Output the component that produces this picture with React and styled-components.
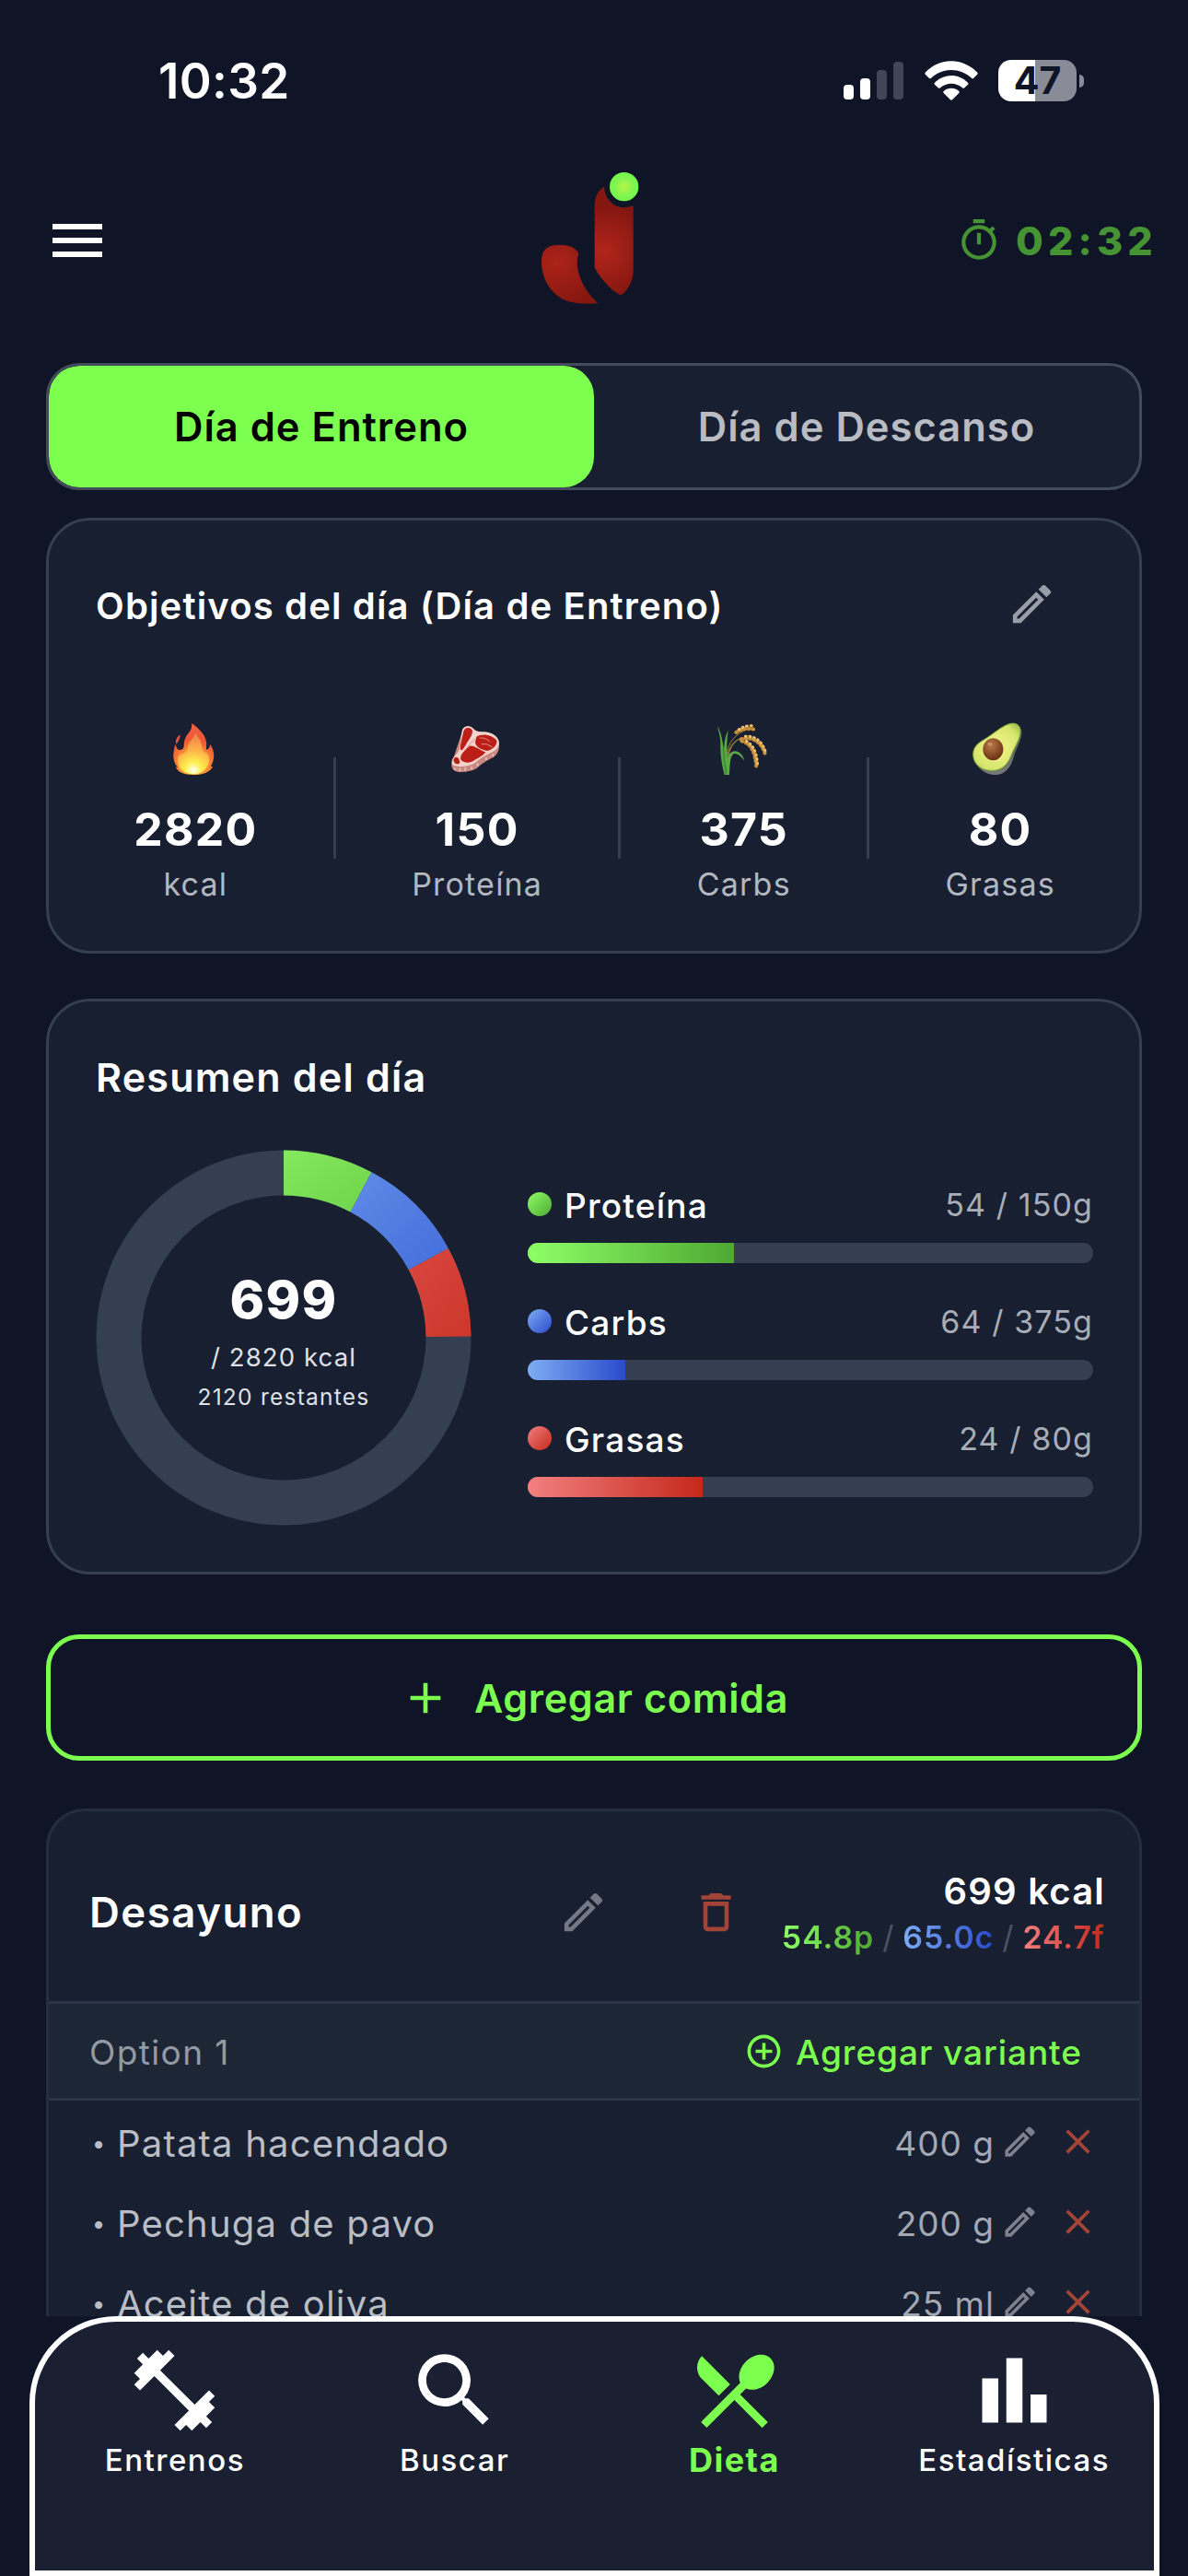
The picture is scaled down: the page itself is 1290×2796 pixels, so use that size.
import React, { useState } from 'react';
import styled, { createGlobalStyle } from 'styled-components';
import {
  MdAdd,
  MdAddCircleOutline,
  MdBarChart,
  MdClose,
  MdDeleteOutline,
  MdFitnessCenter,
  MdLocalDining,
  MdMenu,
  MdOutlineEdit,
  MdOutlineTimer,
  MdSearch,
} from 'react-icons/md';

const GlobalStyle = createGlobalStyle`
  *, *::before, *::after {
    box-sizing: border-box;
  }

  body {
    margin: 0;
    background: #0f1526;
    font-family: Inter, 'Liberation Sans', sans-serif;
    color: #fff;
  }

  svg {
    display: block;
    flex-shrink: 0;
  }

  button {
    font-family: inherit;
    padding: 0;
    margin: 0;
    border: none;
    background: none;
    color: inherit;
    cursor: pointer;
  }
`;

const gradients = {
  green: ['#8eff67', '#4ea832'],
  blue: ['#7eadf4', '#2a4acb'],
  red: ['#f28080', '#c5281a'],
};

const Screen = styled.div`
  width: 1290px;
  height: 2796px;
  display: flex;
  flex-direction: column;
  overflow: hidden;
  background: #0f1526;
`;

const StatusBar = styled.div`
  flex-shrink: 0;
  height: 175px;
  display: flex;
  align-items: center;
  justify-content: space-between;
  padding: 0 113px 0 172px;
`;

const Clock = styled.span`
  font-size: 53px;
  font-weight: 600;
  letter-spacing: 0.3px;
`;

const StatusIcons = styled.div`
  display: flex;
  align-items: center;
`;

const Signal = styled.div`
  display: flex;
  align-items: flex-end;
  gap: 7px;
  height: 41px;
  margin-right: 23px;
`;

const SignalBar = styled.span`
  width: 11px;
  height: ${props => props.$height}px;
  border-radius: 4px;
  background: ${props => props.$on ? '#fff' : '#414555'};
`;

const Battery = styled.div`
  width: 85px;
  height: 45px;
  margin-left: 22px;
  border-radius: 14px;
  background: linear-gradient(90deg, #fff 47%, #898c96 47%);
  display: flex;
  align-items: center;
  justify-content: center;
  color: #0f1526;
  font-size: 41px;
  font-weight: 700;
  line-height: 45px;
`;

const BatteryTip = styled.span`
  width: 5px;
  height: 14px;
  margin-left: 3px;
  border-radius: 0 6px 6px 0;
  background: #898c96;
`;

const Header = styled.header`
  flex-shrink: 0;
  height: 172px;
  display: grid;
  grid-template-columns: 1fr auto 1fr;
  align-items: center;
  padding: 0 33px;
`;

const MenuButton = styled.button`
  justify-self: start;
  padding-left: 15px;
  font-size: 72px;
`;

const Timer = styled.div`
  justify-self: end;
  display: flex;
  align-items: center;
  gap: 15px;
  color: #459332;
  font-size: 43px;
  font-weight: 800;
  letter-spacing: 5.2px;
`;

const Content = styled.main`
  flex: 1;
  min-height: 0;
  overflow: hidden;
  padding: 47px 50px 0;
`;

const DayToggle = styled.div`
  display: flex;
  height: 138px;
  border: 3px solid #414b5b;
  border-radius: 36px;
  background: #171f31;
  overflow: hidden;
`;

const DayTab = styled.button`
  flex: 1;
  border-radius: 33px;
  background: ${props => props.$active ? '#7dff4f' : 'transparent'};
  color: ${props => props.$active ? '#000' : '#b9bcc3'};
  font-size: 43.5px;
  font-weight: 600;
  letter-spacing: 1px;
`;

const Card = styled.section`
  border: 3px solid #343f50;
  border-radius: 48px;
  background: #171f31;
`;

const GoalsCard = styled(Card)`
  height: 473px;
  margin-top: 30px;
  padding: 37px 50px 0 51px;
`;

const GoalsHeader = styled.div`
  display: flex;
  align-items: center;
  justify-content: space-between;
  height: 110px;
  padding-right: 39px;
`;

const GoalsTitle = styled.h2`
  margin: 0;
  font-size: 40px;
  font-weight: 600;
  letter-spacing: 1.15px;
`;

const IconButton = styled.button`
  display: flex;
  padding-bottom: ${props => props.$lift || 0}px;
  font-size: ${props => props.$size || 55}px;
  color: ${props => props.$color};
`;

const Goals = styled.div`
  display: flex;
  align-items: center;
  justify-content: space-around;
  margin-top: 60px;
`;

const Goal = styled.div`
  display: flex;
  flex-direction: column;
  align-items: center;
`;

const GoalIcon = styled.svg`
  width: 60px;
  height: 60px;
  margin: 11px 0;
  overflow: visible;
`;

const GoalValue = styled.span`
  margin-top: 16px;
  font-size: 50px;
  font-weight: 700;
  line-height: 60px;
  letter-spacing: 1.3px;
`;

const GoalLabel = styled.span`
  margin-top: 8px;
  font-size: 34px;
  line-height: 44px;
  letter-spacing: 1.2px;
  color: #b3b7c0;
`;

const GoalDivider = styled.span`
  width: 3px;
  height: 110px;
  background: #343f50;
`;

const SummaryCard = styled(Card)`
  height: 625px;
  margin-top: 49px;
  padding: 52px 50px 0 51px;
`;

const SummaryTitle = styled.h2`
  margin: 0;
  font-size: 43px;
  font-weight: 600;
  line-height: 60px;
  letter-spacing: 1.2px;
`;

const SummaryBody = styled.div`
  display: flex;
  align-items: center;
  gap: 61px;
  margin-top: 49px;
`;

const Donut = styled.div`
  display: grid;
  place-items: center;

  > * {
    grid-area: 1 / 1;
  }
`;

const DonutText = styled.div`
  display: flex;
  flex-direction: column;
  align-items: center;
  padding-top: 10px;
`;

const Consumed = styled.span`
  font-size: 57px;
  font-weight: 800;
  line-height: 60px;
  letter-spacing: 1.3px;
`;

const Target = styled.span`
  margin-top: 14px;
  font-size: 27.5px;
  line-height: 36px;
  letter-spacing: 1.1px;
  color: #dfe1e5;
`;

const Remaining = styled.span`
  margin-top: 7px;
  font-size: 24.5px;
  line-height: 36px;
  letter-spacing: 1.25px;
  color: #dfe1e5;
`;

const MacroList = styled.div`
  flex: 1;
  display: flex;
  flex-direction: column;
  gap: 38px;
  padding-top: 3px;
`;

const MacroHeader = styled.div`
  display: flex;
  align-items: center;
  height: 50px;
`;

const MacroDot = styled.span`
  width: 26px;
  height: 26px;
  margin-right: 14px;
  border-radius: 50%;
  background: linear-gradient(135deg, ${props => gradients[props.$tone].join(', ')});
`;

const MacroName = styled.span`
  flex: 1;
  padding-top: 3px;
  font-size: 37px;
  font-weight: 500;
  letter-spacing: 1.2px;
`;

const MacroAmount = styled.span`
  font-size: 34px;
  letter-spacing: 1.1px;
  color: #a8adb7;
`;

const Track = styled.div`
  height: 22px;
  margin-top: 17px;
  border-radius: 11px;
  background: #344052;
  overflow: hidden;
`;

const TrackFill = styled.div`
  height: 100%;
  background: linear-gradient(90deg, ${props => gradients[props.$tone].join(', ')});
`;

const AddMealButton = styled.button`
  display: flex;
  align-items: center;
  justify-content: center;
  gap: 25px;
  width: 100%;
  height: 137px;
  margin-top: 65px;
  border: 5px solid #7dff4f;
  border-radius: 36px;
  color: #7dff4f;
  font-size: 43px;
  font-weight: 600;
  letter-spacing: 0.7px;
`;

const MealCard = styled(Card)`
  margin-top: 52px;
  border-color: #252e3f;
  border-radius: 42px;
`;

const MealHeader = styled.div`
  display: flex;
  align-items: center;
  height: 209px;
  padding: 12px 37px 0 44px;
  border-bottom: 3px solid #2b3547;
`;

const MealTitle = styled.h3`
  flex: 1;
  margin: 0;
  font-size: 45.5px;
  font-weight: 600;
  letter-spacing: 1.5px;
`;

const MealActions = styled.div`
  display: flex;
  gap: 89px;
  margin-right: 44px;
`;

const MealTotals = styled.div`
  display: flex;
  flex-direction: column;
  align-items: flex-end;
  padding-top: 6px;
`;

const MealKcal = styled.span`
  font-size: 40px;
  font-weight: 600;
  line-height: 50px;
  letter-spacing: 1.2px;
`;

const MealMacros = styled.div`
  display: flex;
  gap: 9px;
  font-size: 34px;
  line-height: 50px;
  letter-spacing: 0.9px;
  color: #4b5362;
`;

const MacroText = styled.span`
  font-weight: 600;
  color: transparent;
  background: linear-gradient(90deg, ${props => gradients[props.$tone].join(', ')});
  background-clip: text;
`;

const OptionRow = styled.div`
  display: flex;
  align-items: center;
  justify-content: space-between;
  height: 105px;
  padding: 0 62px 0 44px;
  border-bottom: 3px solid #2b3547;
  background: #1d2635;
`;

const OptionName = styled.span`
  padding-top: 3px;
  font-size: 37px;
  letter-spacing: 1.4px;
  color: #949aa5;
`;

const AddVariantButton = styled.button`
  display: flex;
  align-items: center;
  gap: 13px;
  color: #7dff4f;
  font-size: 37px;
  font-weight: 500;
  letter-spacing: 0.95px;

  span {
    padding-top: 3px;
  }
`;

const FoodList = styled.ul`
  margin: 0;
  padding: 3px 0 40px;
  list-style: none;
`;

const FoodRow = styled.li`
  display: flex;
  align-items: center;
  height: 87px;
  padding: 0 44px;
`;

const Bullet = styled.span`
  width: 20px;
  margin-right: 10px;
  text-align: center;
  font-size: 26px;
  color: #b9bdc5;
`;

const FoodName = styled.span`
  flex: 1;
  font-size: 40px;
  letter-spacing: 1.2px;
  color: #b9bdc5;
`;

const FoodAmount = styled.span`
  margin-right: 6px;
  font-size: 37px;
  letter-spacing: 1px;
  color: #a3a8b2;
`;

const FoodActions = styled.div`
  display: flex;
  align-items: center;
  gap: 19px;
  padding-bottom: 4px;
`;

const TabBar = styled.nav`
  flex-shrink: 0;
  display: flex;
  height: 282px;
  margin: 0 31px 0 32px;
  padding-top: 22px;
  border: 6px solid #fff;
  border-radius: 94px 94px 0 0;
  background: #1a2032;
`;

const TabItem = styled.button`
  flex: 1 1 0;
  display: flex;
  flex-direction: column;
  align-items: center;
  color: ${props => props.$active ? '#7dff4f' : '#fff'};

  svg {
    font-size: 105px;
  }

  span {
    margin-top: 3px;
    font-size: ${props => props.$active ? 36 : 33}px;
    font-weight: ${props => props.$active ? 700 : 500};
    line-height: 40px;
    letter-spacing: 1.5px;
  }
`;

function WifiIcon() {
  return (
    <svg width="58" height="43" viewBox="0 0 174 129" fill="#fff">
      <path d="M2 38 Q0 42 3 45 L15 57 Q18 59 21 56 C58 21 116 21 153 56 Q156 59 159 57 L171 45 Q174 42 172 38 C124 -12 50 -12 2 38Z" />
      <path d="M33 71 Q30 74 33 77 L44 88 Q47 91 51 88 C72 70 102 70 123 88 Q127 91 130 88 L141 77 Q144 74 141 71 C110 40 64 40 33 71Z" />
      <path d="M62 99 Q59 102 62 105 L84 127 Q87 129 90 127 L112 105 Q115 102 112 99 C98 86 76 86 62 99Z" />
    </svg>
  );
}

function Logo() {
  return (
    <svg width="160" height="170" viewBox="15 18 480 510">
      <defs>
        <radialGradient id="logoStem" gradientUnits="userSpaceOnUse" cx="285" cy="310" r="150">
          <stop offset="0" stopColor="#b2251b" />
          <stop offset="1" stopColor="#841710" />
        </radialGradient>
        <radialGradient id="logoHook" gradientUnits="userSpaceOnUse" cx="135" cy="345" r="150">
          <stop offset="0" stopColor="#ac2319" />
          <stop offset="1" stopColor="#841710" />
        </radialGradient>
        <radialGradient id="logoDot">
          <stop offset="0" stopColor="#b6f548" />
          <stop offset="0.6" stopColor="#84f550" />
          <stop offset="1" stopColor="#72f74c" />
        </radialGradient>
      </defs>
      <path
        fill="url(#logoStem)"
        d="M288 98 C290 140 322 170 362 165 Q374 163 383 160 L383 372 C383 402 368 430 349 447 Q343 453 335 448 C306 430 277 396 257 362 L257 160 C257 132 268 109 288 98Z"
      />
      <path
        fill="url(#logoHook)"
        d="M84 340 C84 305 102 289 135 288 C168 287 192 290 205 316 C190 358 212 428 268 477 C232 480 190 480 160 467 C112 446 84 396 84 340Z"
      />
      <circle cx="353" cy="98" r="47" fill="url(#logoDot)" />
    </svg>
  );
}

function FireIcon() {
  return (
    <GoalIcon viewBox="0 0 180 180">
      <defs>
        <radialGradient id="fireOuter" gradientUnits="userSpaceOnUse" cx="84" cy="140" r="125">
          <stop offset="0" stopColor="#ffd23e" />
          <stop offset="0.4" stopColor="#fb8b33" />
          <stop offset="0.65" stopColor="#ee5535" />
          <stop offset="1" stopColor="#f0623f" />
        </radialGradient>
        <radialGradient id="fireInner" gradientUnits="userSpaceOnUse" cx="84" cy="158" r="105">
          <stop offset="0" stopColor="#fffff0" />
          <stop offset="0.25" stopColor="#fff04f" />
          <stop offset="0.6" stopColor="#fdb64a" />
          <stop offset="1" stopColor="#f58a4a" />
        </radialGradient>
      </defs>
      <path fill="#e2553f" d="M41 43 C41 56 36 66 28 74 C24 66 28 52 41 43Z" />
      <path
        fill="url(#fireOuter)"
        d="M79 6 C96 20 122 40 126 66 C128 76 125 84 126 92 C134 90 138 84 138 74 C148 86 153 104 150 120 C149 130 145 138 140 148 L148 146 C140 164 116 174 84 174 C52 174 34 166 26 148 L34 150 C22 138 16 118 20 98 C21 86 24 80 24 74 C30 82 30 92 38 93 C48 94 54 88 53 76 C53 60 60 46 70 36 C77 28 80 16 79 6Z"
      />
      <path
        fill="url(#fireInner)"
        d="M90 38 C100 52 110 62 111 80 C112 92 118 100 128 104 C136 110 138 126 132 142 C122 162 106 172 84 172 C60 172 42 162 36 142 C32 126 32 114 40 108 C52 106 64 98 66 84 C68 64 84 58 90 38Z"
      />
    </GoalIcon>
  );
}

function MeatIcon() {
  return (
    <GoalIcon viewBox="0 0 180 180">
      <path
        fill="#c98880"
        d="M42 32 C46 14 66 12 76 22 C86 34 96 36 112 36 C138 36 162 52 162 78 C162 96 156 108 142 118 C120 128 106 138 90 152 C70 163 44 168 26 164 C12 160 6 152 7 138 Z"
      />
      <path
        fill="#f3d3cc"
        d="M42 28 C46 14 66 12 76 22 C86 34 96 34 112 34 C138 34 161 50 162 70 C160 86 150 96 134 103 C114 112 100 122 84 134 C66 146 44 148 28 146 C12 146 6 140 8 130 C10 118 20 112 28 100 C38 84 36 52 42 28Z"
      />
      <g fill="#bb2018">
        <path d="M46 32 C52 16 70 20 74 28 C78 40 68 54 58 68 C50 82 44 94 37 94 C33 86 40 60 46 32Z" />
        <path d="M88 50 C108 38 138 44 154 62 C156 78 142 90 124 96 C104 92 86 84 84 68Z" />
        <path d="M66 80 C84 78 98 94 118 100 C110 112 96 118 82 126 C66 138 50 136 38 126 C32 112 46 96 66 80Z" />
        <path d="M13 126 C18 110 32 114 34 134 C28 142 16 140 13 126Z" />
      </g>
      <path d="M84 58 Q64 72 50 96 M98 54 Q118 52 132 66 M104 74 Q122 70 140 84" fill="none" stroke="#e88a80" strokeWidth="3" />
      <path d="M18 152 V160 M34 152 V162 M52 150 V161 M72 146 V157 M92 136 V146 M120 118 V126 M142 106 V114" stroke="#f0cdc6" strokeWidth="4" />
    </GoalIcon>
  );
}

function RiceIcon() {
  return (
    <GoalIcon viewBox="0 0 180 180">
      <g fill="none" stroke="#a58c3c" strokeWidth="3">
        <path d="M32 120 C36 70 56 42 112 20" />
        <path d="M36 130 C40 80 66 52 92 54" />
        <path d="M36 110 C44 76 64 56 86 56" />
      </g>
      <path fill="#58a845" d="M3 16 C16 34 20 70 24 90 C26 64 30 44 38 28 C34 60 32 90 36 120 C40 100 58 92 72 100 C82 106 88 116 91 128 C78 112 66 102 56 106 C44 114 44 140 42 174 L26 174 C16 136 12 100 13 78 C14 56 8 36 3 16Z" />
      <path fill="none" stroke="#35832f" strokeWidth="4" d="M22 84 C24 120 28 150 32 172" />
      <g fill="none" strokeLinecap="round">
        <g stroke="#c98f3c" strokeWidth="12" strokeDasharray="3 11">
          <path d="M64 36 C82 24 100 22 126 26" />
          <path d="M80 58 C110 48 146 62 159 108" />
          <path d="M82 64 C116 74 126 104 130 150" />
        </g>
        <g stroke="#eebf6a" strokeWidth="9" strokeDasharray="3 11" strokeDashoffset="6">
          <path d="M66 32 C82 18 96 14 116 14" />
          <path d="M86 50 C120 42 152 64 161 104" />
          <path d="M90 60 C120 74 132 100 134 146" />
        </g>
      </g>
    </GoalIcon>
  );
}

function AvocadoIcon() {
  return (
    <GoalIcon viewBox="0 0 180 180">
      <defs>
        <linearGradient id="avoSkin" x1="0" y1="0" x2="0" y2="1">
          <stop offset="0" stopColor="#53603a" />
          <stop offset="1" stopColor="#77787a" />
        </linearGradient>
        <radialGradient id="avoFlesh" gradientUnits="userSpaceOnUse" cx="78" cy="84" r="95">
          <stop offset="0.4" stopColor="#e6ee7c" />
          <stop offset="0.8" stopColor="#d3e56c" />
          <stop offset="1" stopColor="#a8c552" />
        </radialGradient>
        <radialGradient id="avoPit" cx="0.4" cy="0.3" r="0.7">
          <stop offset="0" stopColor="#bd7a48" />
          <stop offset="1" stopColor="#6a3013" />
        </radialGradient>
      </defs>
      <path
        fill="url(#avoSkin)"
        d="M124 8 C144 4 162 16 160 40 C158 66 142 88 134 116 C126 150 104 174 74 174 C46 174 20 156 8 132 Z"
      />
      <path
        fill="url(#avoFlesh)"
        stroke="#7fa53c"
        strokeWidth="3"
        d="M120 8 C140 2 158 12 156 34 C154 60 138 82 128 106 C118 136 98 160 66 160 C30 162 2 140 2 108 C2 78 24 68 46 54 C74 36 94 16 120 8Z"
      />
      <ellipse cx="67" cy="91" rx="33" ry="36" fill="url(#avoPit)" />
      <ellipse cx="56" cy="74" rx="7" ry="5" fill="#d9a37c" opacity="0.7" />
    </GoalIcon>
  );
}

function point(angle, radius) {
  const rad = (angle - 90) * Math.PI / 180;
  return `${204 + radius * Math.cos(rad)} ${204 + radius * Math.sin(rad)}`;
}

function arc(from, to) {
  return `M${point(from, 203.5)} A203.5 203.5 0 0 1 ${point(to, 203.5)} L${point(to, 154.5)} A154.5 154.5 0 0 0 ${point(from, 154.5)}Z`;
}

function DonutChart() {
  return (
    <svg width="408" height="408" viewBox="0 0 408 408">
      <defs>
        <linearGradient id="segGreen" x1="0" y1="0" x2="1" y2="1">
          <stop offset="0" stopColor="#84e95e" />
          <stop offset="1" stopColor="#6fd34b" />
        </linearGradient>
        <linearGradient id="segBlue" x1="0" y1="0" x2="1" y2="1">
          <stop offset="0" stopColor="#5f8be6" />
          <stop offset="1" stopColor="#456edb" />
        </linearGradient>
        <linearGradient id="segRed" x1="0" y1="0" x2="1" y2="1">
          <stop offset="0" stopColor="#d9473f" />
          <stop offset="1" stopColor="#cd372b" />
        </linearGradient>
      </defs>
      <circle cx="204" cy="204" r="179" fill="none" stroke="#344052" strokeWidth="49" />
      <path d={arc(0, 28)} fill="url(#segGreen)" />
      <path d={arc(28, 61.5)} fill="url(#segBlue)" />
      <path d={arc(61.5, 89.6)} fill="url(#segRed)" />
    </svg>
  );
}

const goals = [
  { icon: FireIcon, value: 2820, label: 'kcal' },
  { icon: MeatIcon, value: 150, label: 'Proteína' },
  { icon: RiceIcon, value: 375, label: 'Carbs' },
  { icon: AvocadoIcon, value: 80, label: 'Grasas' },
];

const macros = [
  { name: 'Proteína', tone: 'green', current: 54.8, target: 150 },
  { name: 'Carbs', tone: 'blue', current: 64.97, target: 375 },
  { name: 'Grasas', tone: 'red', current: 24.7, target: 80 },
];

const foods = [
  { name: 'Patata hacendado', amount: '400 g' },
  { name: 'Pechuga de pavo', amount: '200 g' },
  { name: 'Aceite de oliva', amount: '25 ml' },
];

const tabs = [
  { label: 'Entrenos', icon: MdFitnessCenter },
  { label: 'Buscar', icon: MdSearch },
  { label: 'Dieta', icon: MdLocalDining },
  { label: 'Estadísticas', icon: MdBarChart },
];

function App() {
  const [day, setDay] = useState('Entreno');
  const [tab, setTab] = useState('Dieta');

  return (
    <Screen>
      <GlobalStyle />
      <StatusBar>
        <Clock>10:32</Clock>
        <StatusIcons>
          <Signal>
            <SignalBar $height={16} $on />
            <SignalBar $height={23} $on />
            <SignalBar $height={32} />
            <SignalBar $height={41} />
          </Signal>
          <WifiIcon />
          <Battery>47</Battery>
          <BatteryTip />
        </StatusIcons>
      </StatusBar>

      <Header>
        <MenuButton><MdMenu /></MenuButton>
        <Logo />
        <Timer>
          <MdOutlineTimer size={50} />
          02:32
        </Timer>
      </Header>

      <Content>
        <DayToggle>
          {['Entreno', 'Descanso'].map((name) => (
            <DayTab key={name} $active={day === name} onClick={() => setDay(name)}>
              Día de {name}
            </DayTab>
          ))}
        </DayToggle>

        <GoalsCard>
          <GoalsHeader>
            <GoalsTitle>Objetivos del día (Día de {day})</GoalsTitle>
            <IconButton $color="#999da7" $lift={4}><MdOutlineEdit /></IconButton>
          </GoalsHeader>
          <Goals>
            {goals.map(({ icon: Icon, value, label }, i) => (
              <React.Fragment key={label}>
                {i > 0 && <GoalDivider />}
                <Goal>
                  <Icon />
                  <GoalValue>{value}</GoalValue>
                  <GoalLabel>{label}</GoalLabel>
                </Goal>
              </React.Fragment>
            ))}
          </Goals>
        </GoalsCard>

        <SummaryCard>
          <SummaryTitle>Resumen del día</SummaryTitle>
          <SummaryBody>
            <Donut>
              <DonutChart />
              <DonutText>
                <Consumed>699</Consumed>
                <Target>/ 2820 kcal</Target>
                <Remaining>2120 restantes</Remaining>
              </DonutText>
            </Donut>
            <MacroList>
              {macros.map((macro) => (
                <div key={macro.name}>
                  <MacroHeader>
                    <MacroDot $tone={macro.tone} />
                    <MacroName>{macro.name}</MacroName>
                    <MacroAmount>
                      {Math.floor(macro.current)} / {macro.target}g
                    </MacroAmount>
                  </MacroHeader>
                  <Track>
                    <TrackFill
                      $tone={macro.tone}
                      style={{ width: `${(macro.current / macro.target) * 100}%` }}
                    />
                  </Track>
                </div>
              ))}
            </MacroList>
          </SummaryBody>
        </SummaryCard>

        <AddMealButton>
          <MdAdd size={56} />
          Agregar comida
        </AddMealButton>

        <MealCard>
          <MealHeader>
            <MealTitle>Desayuno</MealTitle>
            <MealActions>
              <IconButton $color="#727884"><MdOutlineEdit /></IconButton>
              <IconButton $color="#a24438"><MdDeleteOutline /></IconButton>
            </MealActions>
            <MealTotals>
              <MealKcal>699 kcal</MealKcal>
              <MealMacros>
                <MacroText $tone="green">54.8p</MacroText>
                /
                <MacroText $tone="blue">65.0c</MacroText>
                /
                <MacroText $tone="red">24.7f</MacroText>
              </MealMacros>
            </MealTotals>
          </MealHeader>
          <OptionRow>
            <OptionName>Option 1</OptionName>
            <AddVariantButton>
              <MdAddCircleOutline size={43} />
              <span>Agregar variante</span>
            </AddVariantButton>
          </OptionRow>
          <FoodList>
            {foods.map((food) => (
              <FoodRow key={food.name}>
                <Bullet>•</Bullet>
                <FoodName>{food.name}</FoodName>
                <FoodAmount>{food.amount}</FoodAmount>
                <FoodActions>
                  <IconButton $size={43} $color="#7c828d"><MdOutlineEdit /></IconButton>
                  <IconButton $size={45} $color="#a24438"><MdClose /></IconButton>
                </FoodActions>
              </FoodRow>
            ))}
          </FoodList>
        </MealCard>
      </Content>

      <TabBar>
        {tabs.map(({ label, icon: Icon }) => (
          <TabItem key={label} $active={tab === label} onClick={() => setTab(label)}>
            <Icon />
            <span>{label}</span>
          </TabItem>
        ))}
      </TabBar>
    </Screen>
  );
}

export default App;
